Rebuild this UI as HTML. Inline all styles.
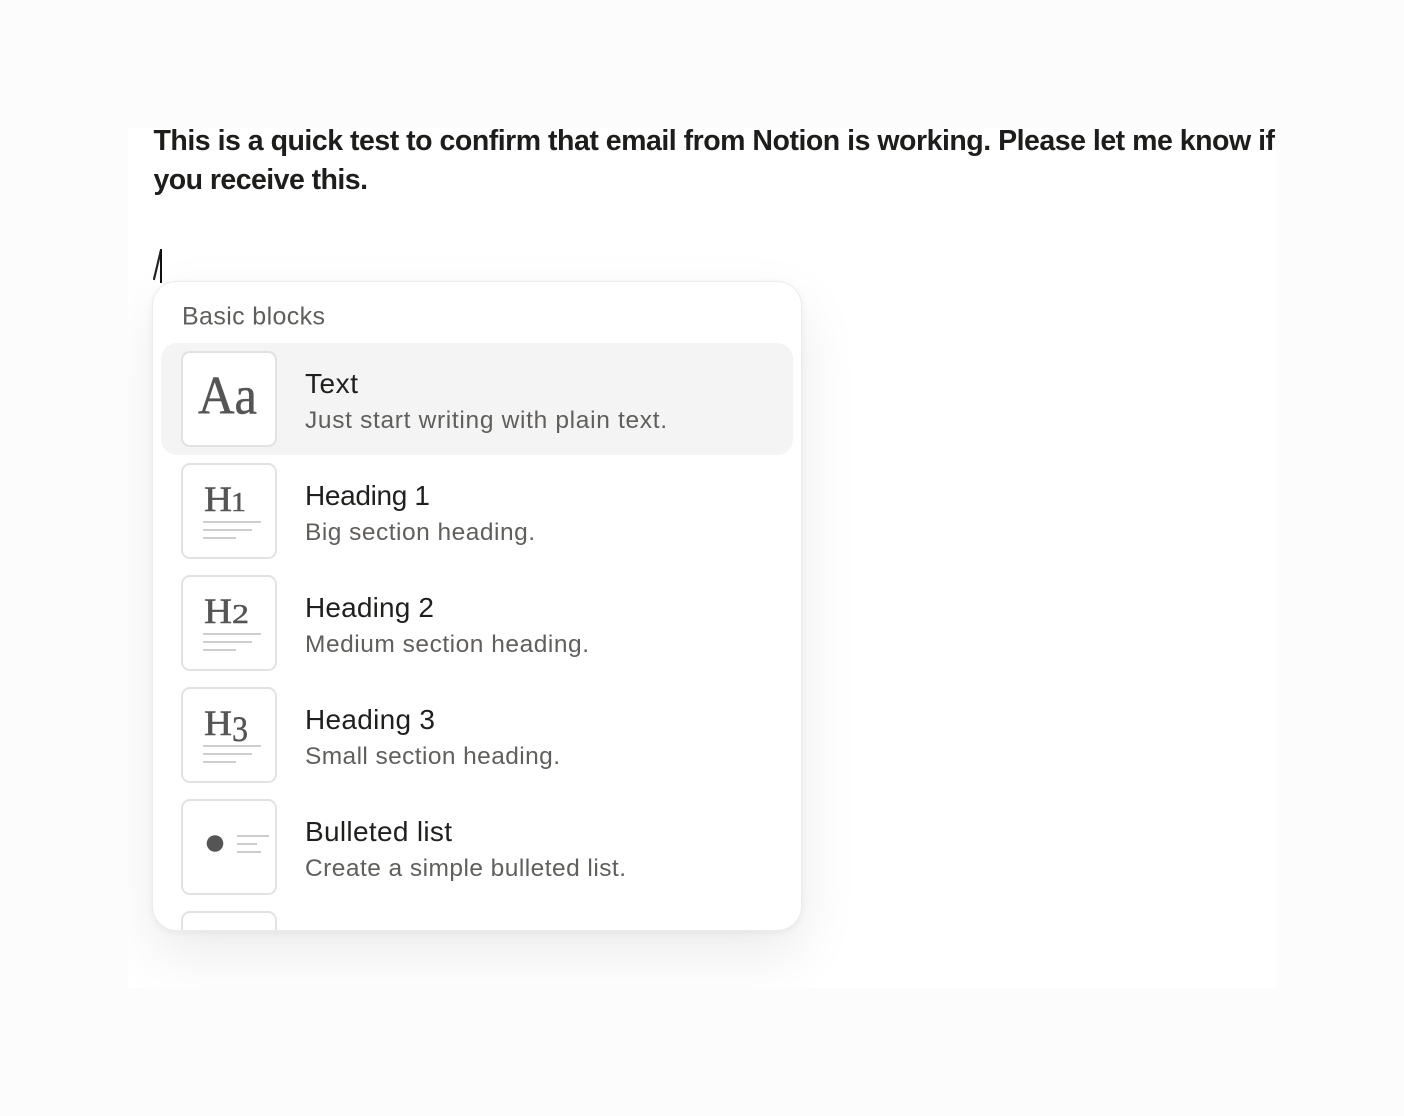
<!DOCTYPE html>
<html lang="en">
<head>
<meta charset="utf-8">
<title>Slash menu</title>
<style>
html,body{margin:0;padding:0;width:1404px;height:1116px;overflow:hidden;background:#fcfcfc;font-family:"Liberation Sans",sans-serif}
#panel{position:absolute;left:128px;top:128px;width:1148px;height:860px;background:#fff;overflow:hidden}
#slash{position:absolute;left:25px;top:112px;width:30px;height:50px}
#menu{position:absolute;left:24px;top:153px;width:650px;height:650px;box-sizing:border-box;background:#fff;border:1.5px solid #ececec;border-radius:25px;box-shadow:0 24px 60px rgba(0,0,0,.08),0 2px 8px rgba(0,0,0,.05)}
#art{position:absolute;left:0;top:0;width:1404px;height:1116px}
.h{font:bold 28.5px "Liberation Sans",sans-serif;fill:#1d1d1b}
.lab{font:400 25px "Liberation Sans",sans-serif;fill:#5f5e5b}
.t{font:400 28px "Liberation Sans",sans-serif;fill:#1f1f1d}
.s{font:400 24.5px "Liberation Sans",sans-serif;fill:#615f5c}
.g{font-family:"Liberation Serif",serif;fill:#555;stroke:#555;stroke-width:.5}
.c{fill:#fff;stroke:#e2e2e2;stroke-width:2}
.l{fill:#cdcdcd}
</style>
</head>
<body>
<div id="panel">
  <svg id="slash" viewBox="0 0 30 50"><line x1="0.8" y1="40" x2="8" y2="10" stroke="#222" stroke-width="2.2"/><rect x="7" y="9" width="2" height="34" fill="#111"/></svg>
  <div id="menu"></div>
</div>
<svg id="art" viewBox="0 0 1404 1116" xmlns="http://www.w3.org/2000/svg">
  <defs><clipPath id="mc"><rect x="154" y="283" width="646" height="647"/></clipPath></defs>

  <text class="h" x="153.5" y="150" textLength="1121.5">This is a quick test to confirm that email from Notion is working. Please let me know if</text>
  <text class="h" x="153.5" y="189" textLength="214.5">you receive this.</text>

  <text class="lab" x="182" y="324.5" textLength="143">Basic blocks</text>

  <rect x="161" y="343" width="632" height="112" rx="16" fill="#f4f4f4"/>

  <rect class="c" x="182" y="352" width="94" height="94" rx="8"/>
  <text class="g" x="198" y="413.5" font-size="54" textLength="59" lengthAdjust="spacingAndGlyphs">Aa</text>
  <text class="t" x="305" y="393" textLength="53">Text</text>
  <text class="s" x="305" y="428" textLength="362">Just start writing with plain text.</text>

  <rect class="c" x="182" y="464" width="94" height="94" rx="8"/>
  <text class="g" x="204" y="511" font-size="36" textLength="28" lengthAdjust="spacingAndGlyphs">H</text>
  <text class="g" x="231" y="511" font-size="27" textLength="15" lengthAdjust="spacingAndGlyphs">1</text>
  <rect class="l" x="203" y="521" width="58" height="2"/>
  <rect class="l" x="203" y="529" width="49" height="2"/>
  <rect class="l" x="203" y="537" width="33" height="2"/>
  <text class="t" x="305" y="505" textLength="125">Heading 1</text>
  <text class="s" x="305" y="540" textLength="230">Big section heading.</text>

  <rect class="c" x="182" y="576" width="94" height="94" rx="8"/>
  <text class="g" x="204" y="623" font-size="36" textLength="28" lengthAdjust="spacingAndGlyphs">H</text>
  <text class="g" x="232" y="623" font-size="27" textLength="17" lengthAdjust="spacingAndGlyphs">2</text>
  <rect class="l" x="203" y="633" width="58" height="2"/>
  <rect class="l" x="203" y="641" width="49" height="2"/>
  <rect class="l" x="203" y="649" width="33" height="2"/>
  <text class="t" x="305" y="617" textLength="129">Heading 2</text>
  <text class="s" x="305" y="652" textLength="284">Medium section heading.</text>

  <rect class="c" x="182" y="688" width="94" height="94" rx="8"/>
  <text class="g" x="204" y="735" font-size="36" textLength="28" lengthAdjust="spacingAndGlyphs">H</text>
  <text class="g" x="232" y="741" font-size="36" textLength="16" lengthAdjust="spacingAndGlyphs">3</text>
  <rect class="l" x="203" y="745" width="58" height="2"/>
  <rect class="l" x="203" y="753" width="49" height="2"/>
  <rect class="l" x="203" y="761" width="33" height="2"/>
  <text class="t" x="305" y="729" textLength="130">Heading 3</text>
  <text class="s" x="305" y="764" textLength="255">Small section heading.</text>

  <rect class="c" x="182" y="800" width="94" height="94" rx="8"/>
  <circle cx="215" cy="843.5" r="8.3" fill="#555"/>
  <rect class="l" x="237" y="835" width="32" height="2"/>
  <rect class="l" x="237" y="843" width="20" height="2"/>
  <rect class="l" x="237" y="851" width="24" height="2"/>
  <text class="t" x="305" y="841" textLength="147">Bulleted list</text>
  <text class="s" x="305" y="876" textLength="321">Create a simple bulleted list.</text>

  <g clip-path="url(#mc)"><rect class="c" x="182" y="912" width="94" height="94" rx="8"/></g>
</svg>
</body>
</html>
